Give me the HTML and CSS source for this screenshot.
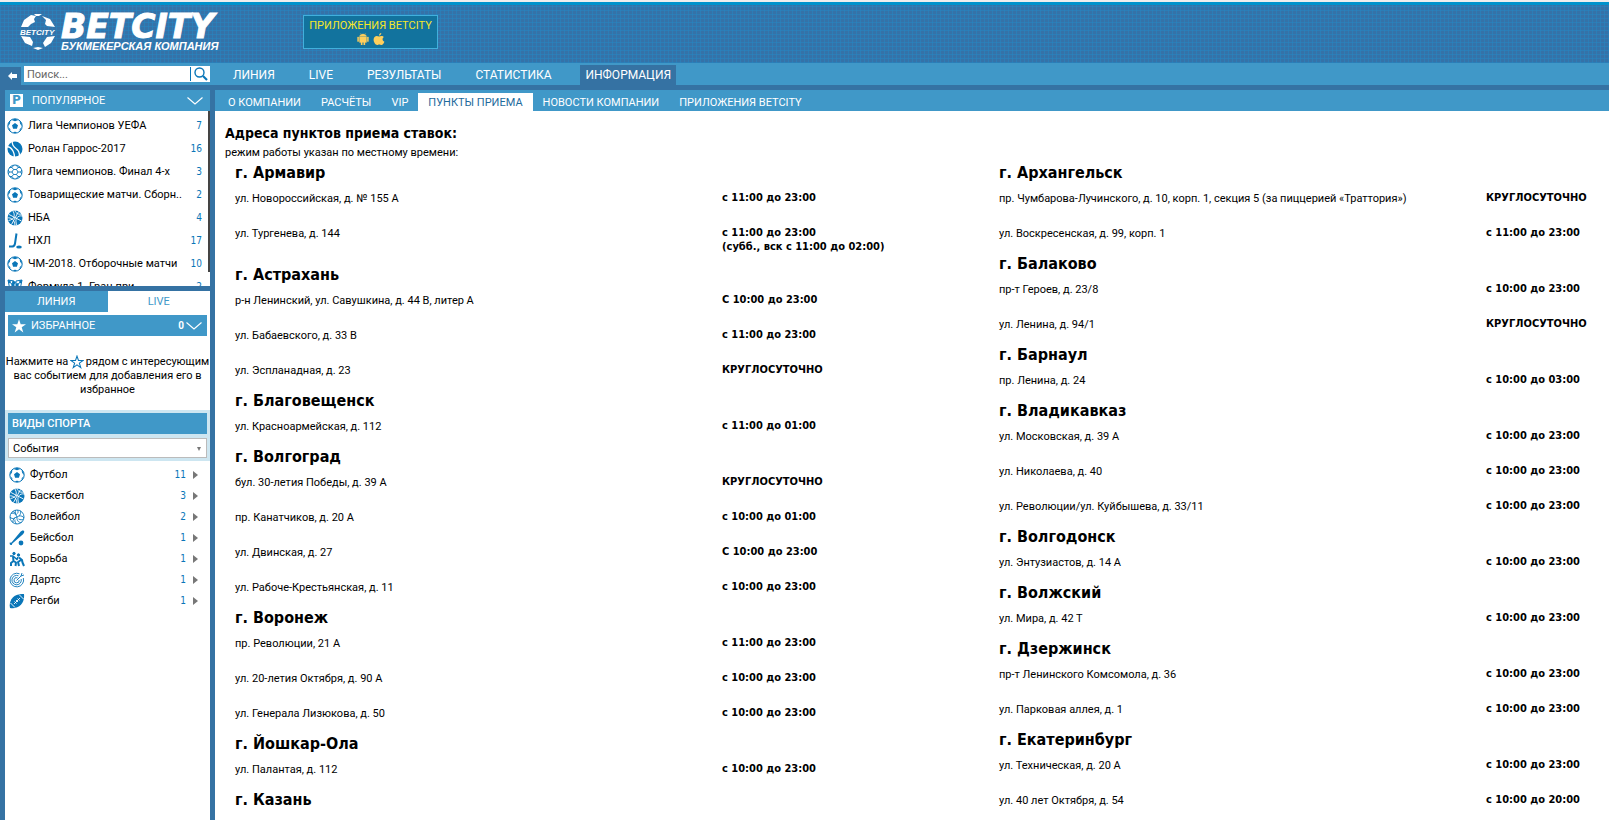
FILE: index.html
```html
<!DOCTYPE html>
<html lang="ru">
<head>
<meta charset="utf-8">
<title>BETCITY — Пункты приема</title>
<link rel="stylesheet" href="styles.css">
</head>
<body>
<svg class="sprite" aria-hidden="true">
  <symbol id="football" viewBox="0 0 16 16"><circle cx="8" cy="8" r="7.200" fill="#fff" stroke="#0a76b8" stroke-width="1"/><path d="M8 5l3 2.200-1.100 3.500H6.100L5 7.200zM4.500 1.900L8 3.300l3.500-1.400L8 .8zM1 8l1.800-2L3.500 3 1.500 5zM15 8l-1.800-2L12.500 3 14.500 5zM3.300 13.500l0-2.500-2-1.500zM12.700 13.500l0-2.500 2-1.500zM6 15l2-1.500 2 1.500z" fill="#0a76b8"/></symbol>
  <symbol id="tennis" viewBox="0 0 16 16"><circle cx="8" cy="8" r="7.500" fill="#0a76b8"/><path d="M5 0c.5 4 1 5.500 4.500 8 2.500 1.800 3 4 3 7M0 5.500c4 .5 4.500 2 6 4.500 1 2 1.500 3.500 1.500 6" fill="none" stroke="#fff" stroke-width="1.300"/></symbol>
  <symbol id="ball" viewBox="0 0 16 16"><g fill="none" stroke="#0a76b8"><circle cx="8" cy="8" r="7"/><path d="M6.500 5.500h3L11 8l-1.500 2.500h-3L5 8zM6.500 5.500L5 3.500l1.500-2M9.500 5.500L11 3.500l-1.500-2M11 8h2.500l1.500-2M9.500 10.500l1.500 2-1.500 2M6.500 10.500l-1.500 2 1.500 2M5 8H2.500L1 6M2.500 8L1.200 10M13.500 8l1.300 2M5 3.500H2.500M11 3.500h2.500M5 12.500H2.800M11 12.500h2.200" stroke-width=".9"/></g></symbol>
  <symbol id="basketball" viewBox="0 0 16 16"><circle cx="8" cy="8" r="7.500" fill="#0a76b8"/><path d="M2 4.500L14.500 11M11.500 1.500L4.500 14.500M5.500.500c3 4 2.500 9-4 10M15.500 6c-5-1-8.500 3-5.500 9.500M8 0c0 2 2 5 7 4M0 8c4-1 8 2 8 8" fill="none" stroke="#fff" stroke-width=".9"/></symbol>
  <symbol id="hockey" viewBox="0 0 16 16"><path d="M9.500.500L8 10.500c-.3 2-1 2.700-2.500 3H2" fill="none" stroke="#0a76b8" stroke-width="2"/><ellipse cx="12" cy="14" rx="2.800" ry="1.500" fill="#0a76b8"/></symbol>
  <symbol id="flags" viewBox="0 0 16 16"><path d="M1 1l6 1v8L3 11zM15 1L9 2v8l4 1z" fill="#fff" stroke="#0a76b8"/><path d="M1 1l2.500.5.500 3-2.500-.5zM4 4l3 .5V7H4.500zM15 1l-2.500.5-.5 3 2.500-.5zM12 4l-3 .5V7h2.500zM2 7l2.500.2L5 10H3zM14 7l-2.500.2L11 10h2zM5.500 1.800L9 3 8 5 5 4z" fill="#0a76b8"/><path d="M4 10l3 6M12 10l-3 6" stroke="#0a76b8"/></symbol>
  <symbol id="volleyball" viewBox="0 0 16 16"><g fill="none" stroke="#0a76b8" stroke-width=".9"><circle cx="8" cy="8" r="7"/><path d="M8 8C7 5 4.500 3.500 2 4.500M8 8c3-1 4.500-4 3-6.500M8 8c-.5 3 1.500 6 4.500 5.500M7.500 6C6 3.500 6 2.500 6.500 1M8 8c-3 .5-4.500 3-4 5.500M6 9c-2 1-4 .5-5-1M6.800 5C5.500 3 4.500 2.500 3.500 2.800M10 7c2.500-.5 4 .5 5 2M9.500 10c2 1 3.500 1 5 0M8.500 4.500C9.500 3 9 2 8.500 1M6 10.500c-.5 2 .5 3.500 1.500 4.500"/></g></symbol>
  <symbol id="baseball" viewBox="0 0 16 16"><path d="M14.800.8c-1-.9-2.300-.2-3.300.9L2.500 12.500l-2 .3.500 2 1.800.2.500-1.500L14 4.300c1-1.200 1.800-2.500.8-3.500z" fill="#0a76b8"/><circle cx="12" cy="13" r="2.400" fill="#0a76b8"/></symbol>
  <symbol id="wrestling" viewBox="0 0 16 16"><g fill="none" stroke="#0a76b8" stroke-linejoin="round"><circle cx="5" cy="2.500" r="1.200" fill="#0a76b8"/><circle cx="9.500" cy="4" r="1.200" fill="#0a76b8"/><path d="M1 5l3 0 4 3.500 1-2.500" stroke-width="1.600"/><path d="M4 5.500L4.500 10 2 12v3M4.500 10L7 11.500 6.500 15M10 6.500l3 2.500.5 2.500 1.500 3.500M12 9l-3 2 1 4" stroke-width="2"/></g></symbol>
  <symbol id="darts" viewBox="0 0 16 16"><g fill="none" stroke="#0a76b8" stroke-width=".9"><path d="M10.500 1.800A6.800 6.800 0 1 0 14.300 6M9.500 3.800A4.700 4.700 0 1 0 12.200 7M8.500 5.800A2.600 2.600 0 1 0 10.200 8"/><path d="M7.500 8.500L12 4l1-3M12 4l3-1"/></g></symbol>
  <symbol id="rugby" viewBox="0 0 16 16"><path d="M1 15C-.5 8 4 0 15 1c1 9-5 15.500-14 14z" fill="#0a76b8"/><path d="M5 11l6-6M5.500 8.500l2 2M7 7l2 2M8.500 5.500l2 2M1.500 10l4.500 4.500M10 1.500L14.500 6" fill="none" stroke="#fff" stroke-width=".9"/></symbol>
  <symbol id="chevron" viewBox="0 0 16 8"><path d="M.5.500L8 7 15.500.500" fill="none" stroke="#fff" stroke-width="1.100"/></symbol>
  <symbol id="star" viewBox="0 0 16 16"><path d="M8 1.200l1.700 5h5.300l-4.300 3.100 1.600 5.100L8 11.200l-4.300 3.200 1.600-5.100L1 6.200h5.300z"/></symbol>
</svg>

<header class="header">
  <a class="logo" href="#" aria-label="BETCITY">
    <svg class="logo-globe" viewBox="0 0 36 36"><path d="M1 13L4 6l7-5 5 1-2 3 1 3-4 2-3 3zM14 0h8l-3 2h-3zM22 2l8 3 5 8-8-1-2-2 1-4zM1 22l9 1 3 5-1 4-7-3zM35 22l-8 1-4 6 2 4 6-4zM13 34l5-1 5 1-5 2z" fill="#fff"/><text x="0" y="21" class="globe-text">BETCITY</text></svg>
    <span class="logo-words"><span class="logo-name">BETCITY</span><span class="logo-sub">БУКМЕКЕРСКАЯ КОМПАНИЯ</span></span>
  </a>
  <a class="apps" href="#">ПРИЛОЖЕНИЯ BETCITY
    <span class="apps-icons">
      <svg width="12" height="12" viewBox="0 0 12 12"><path d="M2.500 3.500C2.700 2 4 1 6 1s3.300 1 3.500 2.500zM2.500 4h7v5.500H8V12H6.700V9.500H5.300V12H4V9.500H2.500zM.5 4h1.300v4.500H.5zM10.200 4h1.300v4.500h-1.300zM3 0l1.200 1.500M9 0L7.800 1.500" fill="#ffcf5c" stroke="#ffcf5c" stroke-width=".3"/></svg>
      <svg width="12" height="12" viewBox="0 0 12 12"><path d="M8.300 0C8.300 1.500 7.300 2.600 6 2.600 6 1.200 7 .2 8.300 0zM6 3.400C6.800 3.400 7.500 2.900 8.500 2.900c1 0 1.900.5 2.400 1.200-2 1.300-1.600 3.800.5 4.600C10.800 10.300 9.600 12 8.500 12 7.600 12 7.200 11.500 6.300 11.500S5 12 4.100 12C2.500 12 .5 9 .6 6.500.7 4.300 2.100 2.900 3.800 2.900 4.700 2.900 5.400 3.400 6 3.400z" fill="#ffcf5c"/></svg>
    </span>
  </a>
</header>

<div class="menu">
  <button class="collapse" type="button" aria-label="Свернуть"><svg width="9" height="8" viewBox="0 0 9 8"><path d="M0 4l4-4v2h5v4H4v2z" fill="#fff"/></svg></button>
  <form class="search">
    <input type="text" placeholder="Поиск..." aria-label="Поиск">
    <button type="button" aria-label="Найти"><svg width="14" height="14" viewBox="0 0 14 14"><circle cx="5.500" cy="5.500" r="4.500" fill="none" stroke="#0a76b8" stroke-width="1.400"/><path d="M9 9l4 4" stroke="#0a76b8" stroke-width="2.200"/></svg></button>
  </form>
  <nav class="main-nav"><a href="#">ЛИНИЯ</a><a href="#">LIVE</a><a href="#">РЕЗУЛЬТАТЫ</a><a href="#">СТАТИСТИКА</a><a href="#" class="active">ИНФОРМАЦИЯ</a></nav>
</div>

<div class="layout">
  <aside class="sidebar">
    <section class="popular">
      <button class="bar" type="button"><span class="p-mark">P</span><span class="grow">ПОПУЛЯРНОЕ</span><svg class="chev"><use href="#chevron"/></svg></button>
      <ul class="pop-list">
        <li><a href="#"><svg class="ico"><use href="#football"/></svg><span class="grow">Лига Чемпионов УЕФА</span><b>7</b></a></li>
        <li><a href="#"><svg class="ico"><use href="#tennis"/></svg><span class="grow">Ролан Гаррос-2017</span><b>16</b></a></li>
        <li><a href="#"><svg class="ico"><use href="#ball"/></svg><span class="grow">Лига чемпионов. Финал 4-х</span><b>3</b></a></li>
        <li><a href="#"><svg class="ico"><use href="#football"/></svg><span class="grow">Товарищеские матчи. Сборн..</span><b>2</b></a></li>
        <li><a href="#"><svg class="ico"><use href="#basketball"/></svg><span class="grow">НБА</span><b>4</b></a></li>
        <li><a href="#"><svg class="ico"><use href="#hockey"/></svg><span class="grow">НХЛ</span><b>17</b></a></li>
        <li><a href="#"><svg class="ico"><use href="#football"/></svg><span class="grow">ЧМ-2018. Отборочные матчи</span><b>10</b></a></li>
        <li><a href="#"><svg class="ico"><use href="#flags"/></svg><span class="grow">Формула 1. Гран-при ..</span><b>2</b></a></li>
      </ul>
    </section>
    <section class="events">
      <div class="tabs"><button type="button" class="on">ЛИНИЯ</button><button type="button">LIVE</button></div>
      <button class="bar fav" type="button"><svg class="star"><use href="#star"/></svg><span class="grow">ИЗБРАННОЕ</span><span class="count">0</span><svg class="chev"><use href="#chevron"/></svg></button>
      <p class="hint">Нажмите на <svg class="star-line" viewBox="0 0 16 16"><use href="#star"/></svg> рядом с интересующим вас событием для добавления его в избранное</p>
      <div class="sports-head">
        <h2 class="bar">ВИДЫ СПОРТА</h2>
        <div class="select-wrap"><select aria-label="Тип"><option>События</option></select></div>
      </div>
      <ul class="sports">
        <li><a href="#"><svg class="ico"><use href="#football"/></svg><span class="grow">Футбол</span><b>11</b><i></i></a></li>
        <li><a href="#"><svg class="ico"><use href="#basketball"/></svg><span class="grow">Баскетбол</span><b>3</b><i></i></a></li>
        <li><a href="#"><svg class="ico"><use href="#volleyball"/></svg><span class="grow">Волейбол</span><b>2</b><i></i></a></li>
        <li><a href="#"><svg class="ico"><use href="#baseball"/></svg><span class="grow">Бейсбол</span><b>1</b><i></i></a></li>
        <li><a href="#"><svg class="ico"><use href="#wrestling"/></svg><span class="grow">Борьба</span><b>1</b><i></i></a></li>
        <li><a href="#"><svg class="ico"><use href="#darts"/></svg><span class="grow">Дартс</span><b>1</b><i></i></a></li>
        <li><a href="#"><svg class="ico"><use href="#rugby"/></svg><span class="grow">Регби</span><b>1</b><i></i></a></li>
      </ul>
    </section>
  </aside>

  <main class="main">
    <nav class="sub-nav"><a href="#">О КОМПАНИИ</a><a href="#">РАСЧЁТЫ</a><a href="#">VIP</a><a href="#" class="active">ПУНКТЫ ПРИЕМА</a><a href="#">НОВОСТИ КОМПАНИИ</a><a href="#">ПРИЛОЖЕНИЯ BETCITY</a></nav>
    <div class="content">
      <h1>Адреса пунктов приема ставок:</h1>
      <p class="note">режим работы указан по местному времени:</p>
      <div class="columns">
        <table class="places wide">
          <colgroup><col class="address"><col></colgroup>
          <tr><th colspan="2">г. Армавир</th></tr>
          <tr><td>ул. Новороссийская, д. № 155 А</td><td>с 11:00 до 23:00</td></tr>
          <tr><td>ул. Тургенева, д. 144</td><td>с 11:00 до 23:00<br>(субб., вск с 11:00 до 02:00)</td></tr>
          <tr><th colspan="2">г. Астрахань</th></tr>
          <tr><td>р-н Ленинский, ул. Савушкина, д. 44 В, литер А</td><td>С 10:00 до 23:00</td></tr>
          <tr><td>ул. Бабаевского, д. 33 В</td><td>с 11:00 до 23:00</td></tr>
          <tr><td>ул. Эспланадная, д. 23</td><td>КРУГЛОСУТОЧНО</td></tr>
          <tr><th colspan="2">г. Благовещенск</th></tr>
          <tr><td>ул. Красноармейская, д. 112</td><td>с 11:00 до 01:00</td></tr>
          <tr><th colspan="2">г. Волгоград</th></tr>
          <tr><td>бул. 30-летия Победы, д. 39 А</td><td>КРУГЛОСУТОЧНО</td></tr>
          <tr><td>пр. Канатчиков, д. 20 А</td><td>с 10:00 до 01:00</td></tr>
          <tr><td>ул. Двинская, д. 27</td><td>С 10:00 до 23:00</td></tr>
          <tr><td>ул. Рабоче-Крестьянская, д. 11</td><td>с 10:00 до 23:00</td></tr>
          <tr><th colspan="2">г. Воронеж</th></tr>
          <tr><td>пр. Революции, 21 А</td><td>с 11:00 до 23:00</td></tr>
          <tr><td>ул. 20-летия Октября, д. 90 А</td><td>с 10:00 до 23:00</td></tr>
          <tr><td>ул. Генерала Лизюкова, д. 50</td><td>с 10:00 до 23:00</td></tr>
          <tr><th colspan="2">г. Йошкар-Ола</th></tr>
          <tr><td>ул. Палантая, д. 112</td><td>с 10:00 до 23:00</td></tr>
          <tr><th colspan="2">г. Казань</th></tr>
        </table>
        <table class="places narrow">
          <colgroup><col class="address"><col></colgroup>
          <tr><th colspan="2">г. Архангельск</th></tr>
          <tr><td>пр. Чумбарова-Лучинского, д. 10, корп. 1, секция 5 (за пиццерией «Траттория»)</td><td>КРУГЛОСУТОЧНО</td></tr>
          <tr><td>ул. Воскресенская, д. 99, корп. 1</td><td>с 11:00 до 23:00</td></tr>
          <tr><th colspan="2">г. Балаково</th></tr>
          <tr><td>пр-т Героев, д. 23/8</td><td>с 10:00 до 23:00</td></tr>
          <tr><td>ул. Ленина, д. 94/1</td><td>КРУГЛОСУТОЧНО</td></tr>
          <tr><th colspan="2">г. Барнаул</th></tr>
          <tr><td>пр. Ленина, д. 24</td><td>с 10:00 до 03:00</td></tr>
          <tr><th colspan="2">г. Владикавказ</th></tr>
          <tr><td>ул. Московская, д. 39 А</td><td>с 10:00 до 23:00</td></tr>
          <tr><td>ул. Николаева, д. 40</td><td>с 10:00 до 23:00</td></tr>
          <tr><td>ул. Революции/ул. Куйбышева, д. 33/11</td><td>с 10:00 до 23:00</td></tr>
          <tr><th colspan="2">г. Волгодонск</th></tr>
          <tr><td>ул. Энтузиастов, д. 14 А</td><td>с 10:00 до 23:00</td></tr>
          <tr><th colspan="2">г. Волжский</th></tr>
          <tr><td>ул. Мира, д. 42 Т</td><td>с 10:00 до 23:00</td></tr>
          <tr><th colspan="2">г. Дзержинск</th></tr>
          <tr><td>пр-т Ленинского Комсомола, д. 36</td><td>с 10:00 до 23:00</td></tr>
          <tr><td>ул. Парковая аллея, д. 1</td><td>с 10:00 до 23:00</td></tr>
          <tr><th colspan="2">г. Екатеринбург</th></tr>
          <tr><td>ул. Техническая, д. 20 А</td><td>с 10:00 до 23:00</td></tr>
          <tr><td>ул. 40 лет Октября, д. 54</td><td>с 10:00 до 20:00</td></tr>
        </table>
      </div>
    </div>
  </main>
</div>
</body>
</html>
```

FILE: styles.css
```css
:root { --dark: #3572a3; --light: #4098c8; --ink: #0a76b8; --strong: Tahoma, "DejaVu Sans Condensed", sans-serif; }
* { box-sizing: border-box; }
body { margin: 0; height: 100vh; overflow: hidden; display: flex; flex-direction: column; background: var(--dark); color: #000; font: 11px/14px Tahoma, Roboto, sans-serif; }
button, input, select { font: inherit; color: inherit; margin: 0; padding: 0; border: 0; background: none; }
a { color: inherit; text-decoration: none; }
ul { list-style: none; margin: 0; padding: 0; }
h1, h2, p { margin: 0; }
.sprite { display: none; }
.grow { flex: 1; text-align: left; white-space: nowrap; }

.header { flex: none; display: flex; align-items: flex-start; gap: 64px; height: 63px; padding: 9px 0 0 20px; border-top: 2px solid #eee;
  background: linear-gradient(#0092cc 0 3px, transparent 3px), repeating-linear-gradient(90deg, #2488c480 0 1px, transparent 1px 4px), repeating-linear-gradient(#2488c480 0 1px, transparent 1px 4px), #3572a8; }
.logo { display: flex; gap: 5px; color: #fff; width: 219px; padding-top: 3px; }
.logo-globe { width: 36px; height: 36px; flex: none; overflow: visible; }
.globe-text { font: italic bold 8px "Liberation Sans", sans-serif; fill: #fff; }
.logo-words { display: flex; flex-direction: column; gap: 2px; white-space: nowrap; }
.logo-name { font: italic bold 33px/25px "DejaVu Sans", sans-serif; -webkit-text-stroke: 1px #fff; }
.logo-sub { font: italic bold 11px/11px "Liberation Sans", sans-serif; }
.apps { width: 135px; height: 34px; margin-top: 4px; padding-top: 3px; border: 1px solid #41b0dc; background: #12739e; color: #f5e72a; text-align: center; white-space: nowrap; }
.apps-icons { display: flex; justify-content: center; gap: 4px; }

.menu { flex: none; display: flex; align-items: center; height: 22px; background: var(--light); }
.collapse { width: 21px; height: 18px; align-self: flex-end; padding-left: 4px; background: var(--dark); display: grid; place-items: center; }
.search { display: flex; align-items: center; width: 186px; height: 16px; margin-left: 3px; background: #fff; }
.search input { flex: 1; min-width: 0; padding: 1px 0 0 3px; outline: 0; }
.search input::placeholder { color: #666; }
.search button { height: 14px; padding: 0 2px 0 3px; border-left: 1px solid var(--ink); display: grid; place-items: center; }
.main-nav { display: flex; gap: 24px; margin-left: 18px; align-self: stretch; padding-top: 2px; color: #fff; font-size: 12px; line-height: 21px; }
.main-nav a { padding: 0 5px; }
.main-nav .active { background: var(--dark); }

.layout { flex: 1; min-height: 0; display: flex; gap: 5px; padding: 5px 0 0 5px; }
.sidebar { flex: none; width: 205px; display: flex; flex-direction: column; gap: 5px; }
.bar { display: flex; align-items: center; width: 100%; height: 21px; padding: 0 7px 0 5px; background: var(--light); color: #fff; font-size: 11px; font-weight: 400; }
.p-mark { width: 13px; height: 13px; margin-right: 9px; background: #fff; color: var(--light); font: bold 12px/13px "DejaVu Sans", sans-serif; text-align: center; }
.chev { width: 16px; height: 8px; flex: none; }
.ico { width: 16px; height: 16px; flex: none; }
.pop-list { height: 175px; padding-top: 3px; overflow: hidden; background: linear-gradient(#444, #444) right top / 2px 161px no-repeat #fff; }
.pop-list a { display: flex; align-items: center; height: 23px; gap: 5px; padding: 0 8px 0 2px; }
b { font-weight: 400; color: var(--ink); font-family: "DejaVu Sans Condensed", sans-serif; font-size: 10px; }
.events { flex: 1; background: #fff; }
.tabs { display: flex; }
.tabs button { flex: 1; height: 21px; color: var(--light); }
.tabs .on { background: var(--light); color: #fff; }
.fav { width: auto; min-width: 199px; margin: 3px 3px 0; padding: 0 5px 0 3px; }
.star { width: 16px; height: 16px; margin-right: 4px; fill: #fff; }
.count { margin-right: 2px; font-size: 10px; font-weight: 700; }
.hint { padding: 19px 0 0; height: 74px; text-align: center; }
.star-line { width: 14px; height: 14px; margin: -4px -1px; vertical-align: middle; fill: none; stroke: var(--ink); stroke-width: 1.2px; }
.sports-head { padding: 3px; background: #cde6f1; }
.sports-head .bar { padding-left: 4px; font-weight: 500; }
.select-wrap { position: relative; margin-top: 4px; }
.select-wrap::after { content: ""; position: absolute; right: 6px; top: 9px; border: 2px solid transparent; border-top: 4px solid #777; border-bottom: 0; }
select { display: block; appearance: none; width: 100%; height: 20px; padding: 1px 4px 0; border: 1px solid #bbb; background: #fff; }
.sports { padding-top: 3px; }
.sports a { display: flex; align-items: center; height: 21px; gap: 5px; padding: 1px 12px 0 4px; }
.sports i { border: 4px solid transparent; border-left: 5px solid #777; border-right: 0; margin-left: 2px; }

.main { flex: 1; min-width: 0; background: #fff; overflow: hidden; }
.sub-nav { display: flex; height: 21px; padding: 3px 0 0 3px; background: var(--light); color: #fff; white-space: nowrap; }
.sub-nav a { padding: 3px 10px; }
.sub-nav .active { background: #fff; color: #1e6a9c; }
.content { padding: 13px 0 0 10px; }
h1 { font: bold 14px/18px var(--strong); }
.note { padding-top: 4px; }
.columns { display: flex; align-items: flex-start; padding: 2px 0 0 10px; }
.places { table-layout: fixed; border-collapse: collapse; }
.wide { width: 764px; flex: 764 1 0; }
.narrow { width: 610px; flex: 610 1 0; }
.places th { height: 21px; padding: 0; font: bold 16px/20px var(--strong); text-align: left; }
.places td { height: 35px; padding: 9px 0 0; vertical-align: top; white-space: nowrap; }
.places td + td { padding: 8px 0 10px; font-family: var(--strong); font-weight: 700; }
.address { width: 487px; }
```
